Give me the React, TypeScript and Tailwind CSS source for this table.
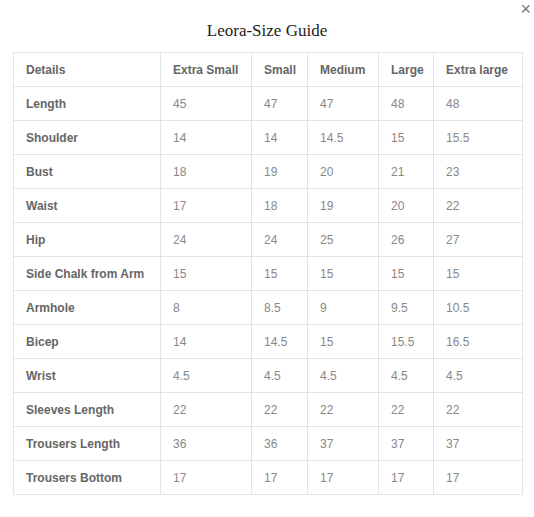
import React from "react";

const headers = ["Details", "Extra Small", "Small", "Medium", "Large", "Extra large"];
const widths = ["w-[147px]", "w-[91px]", "w-[56px]", "w-[71px]", "w-[55px]", "w-[89px]"];
const rows: string[][] = [
  ["Length", "45", "47", "47", "48", "48"],
  ["Shoulder", "14", "14", "14.5", "15", "15.5"],
  ["Bust", "18", "19", "20", "21", "23"],
  ["Waist", "17", "18", "19", "20", "22"],
  ["Hip", "24", "24", "25", "26", "27"],
  ["Side Chalk from Arm", "15", "15", "15", "15", "15"],
  ["Armhole", "8", "8.5", "9", "9.5", "10.5"],
  ["Bicep", "14", "14.5", "15", "15.5", "16.5"],
  ["Wrist", "4.5", "4.5", "4.5", "4.5", "4.5"],
  ["Sleeves Length", "22", "22", "22", "22", "22"],
  ["Trousers Length", "36", "36", "37", "37", "37"],
  ["Trousers Bottom", "17", "17", "17", "17", "17"],
];

export default function App() {
  return (
    <div className="relative w-[534px] h-[517px] bg-white font-['Liberation_Sans',Arial,sans-serif]">
      <div className="absolute right-[3px] top-0 text-[#777] text-[18px] leading-[18px]">×</div>
      <div className="pt-[19px] text-center font-['Liberation_Serif','Times_New_Roman',serif] text-[17px] leading-[24px] text-[#222]">
        Leora-Size Guide
      </div>
      <div className="mt-[9px] pl-[13px]">
        <table className="border-collapse table-fixed w-[509px]">
          <thead>
            <tr className="h-[34px]">
              {headers.map((h, i) => (
                <th
                  key={h}
                  className={`${widths[i]} border border-[#e4e4e4] px-[12px] text-left text-[12px] font-bold text-[#666]`}
                >
                  {h}
                </th>
              ))}
            </tr>
          </thead>
          <tbody>
            {rows.map((r) => (
              <tr key={r[0]} className="h-[34px]">
                {r.map((c, i) => (
                  <td
                    key={i}
                    className={
                      i === 0
                        ? "border border-[#e4e4e4] px-[12px] text-[12px] font-bold text-[#666] whitespace-nowrap"
                        : "border border-[#e4e4e4] px-[12px] text-[12px] text-[#888]"
                    }
                  >
                    {c}
                  </td>
                ))}
              </tr>
            ))}
          </tbody>
        </table>
      </div>
    </div>
  );
}
